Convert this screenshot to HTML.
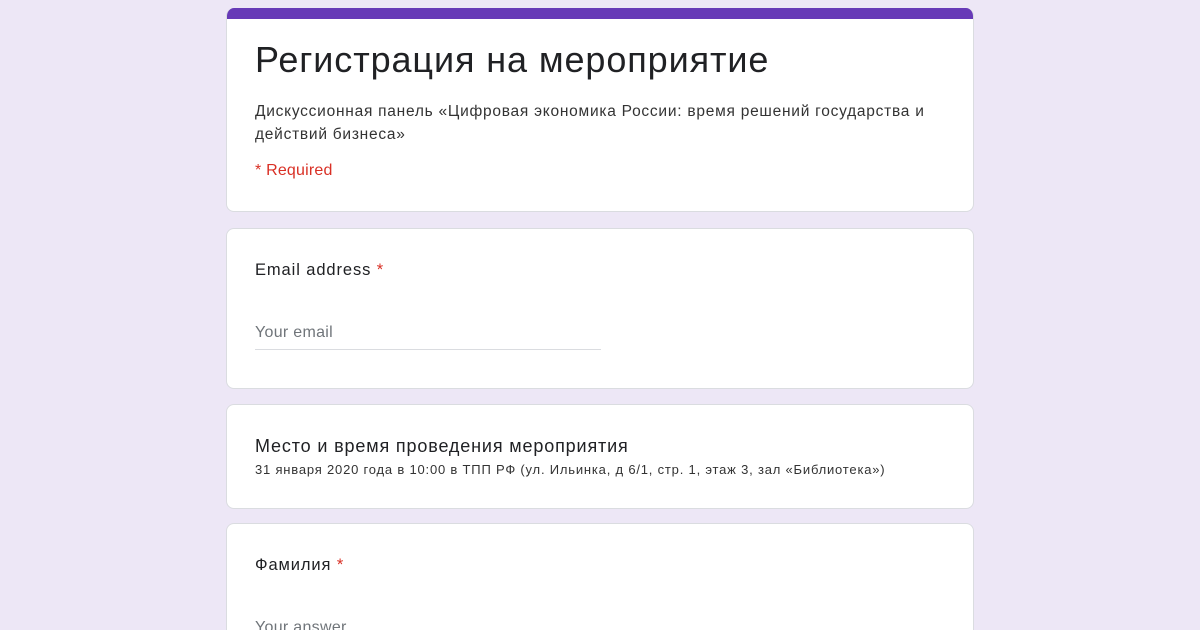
<!DOCTYPE html>
<html style="overflow:hidden"><head><meta charset="utf-8"><style>
html,body{margin:0;width:1200px;height:630px;overflow:hidden}
body{background:#ede7f6;font-family:"Liberation Sans",sans-serif;color:#202124;position:relative}
.card{position:absolute;left:226px;width:746px;background:#fff;border:1px solid #dadce0;border-radius:8px;overflow:hidden}
.t{position:absolute;left:28px;white-space:nowrap}
</style></head><body>
<div class="card" style="top:8px;height:203px;border-top:none">
 <div style="height:11px;background:#673ab7"></div>
 <div class="t" style="top:31px;font-size:36px;letter-spacing:0.9px">Регистрация на мероприятие</div>
 <div class="t" style="top:92px;font-size:15.5px;line-height:23px;color:#333;letter-spacing:0.75px">Дискуссионная панель «Цифровая экономика России: время решений государства и<br>действий бизнеса»</div>
 <div class="t" style="top:154px;font-size:16px;color:#d93025;letter-spacing:0.2px">* Required</div>
</div>
<div class="card" style="top:228px;height:159px">
 <div class="t" style="top:32px;font-size:16.5px;letter-spacing:0.9px">Email address <span style="color:#d93025">*</span></div>
 <div class="t" style="top:95px;font-size:16px;color:#70757a;letter-spacing:0.3px">Your email</div>
 <div style="position:absolute;left:28px;top:120px;width:346px;height:1px;background:#dadce0"></div>
</div>
<div class="card" style="top:404px;height:103px">
 <div class="t" style="top:31px;font-size:18px;letter-spacing:0.85px">Место и время проведения мероприятия</div>
 <div class="t" style="top:57px;font-size:13px;color:#333;letter-spacing:0.8px">31 января 2020 года в 10:00 в ТПП РФ (ул. Ильинка, д 6/1, стр. 1, этаж 3, зал «Библиотека»)</div>
</div>
<div class="card" style="top:523px;height:107px;border-bottom:none;border-radius:8px 8px 0 0">
 <div class="t" style="top:32px;font-size:16.5px;letter-spacing:0.9px">Фамилия <span style="color:#d93025">*</span></div>
 <div class="t" style="top:95px;font-size:16px;color:#70757a;letter-spacing:0.3px">Your answer</div>
</div>
</body></html>
